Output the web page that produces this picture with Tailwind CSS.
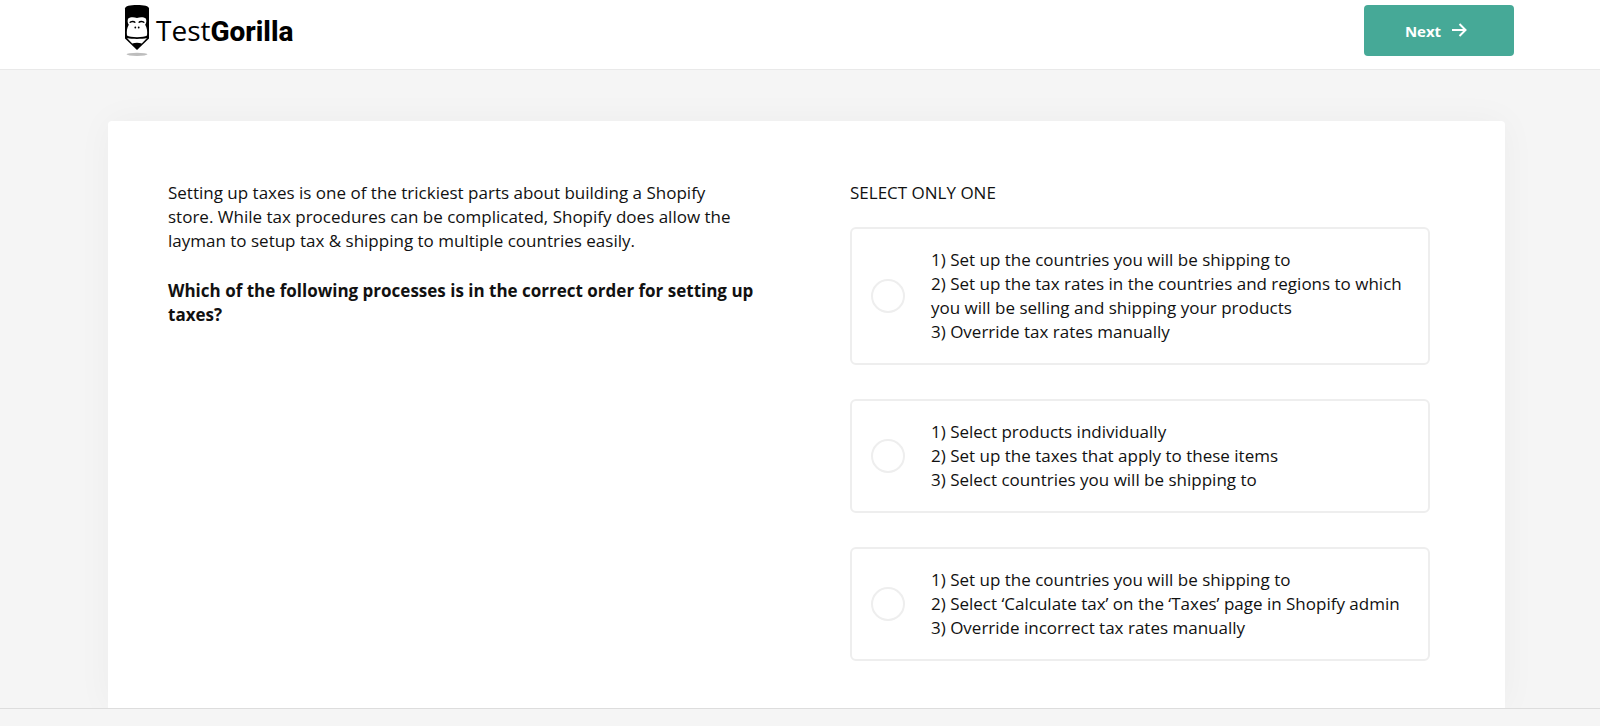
<!DOCTYPE html>
<html lang="en">
<head>
  <meta charset="UTF-8" />
  <meta name="viewport" content="width=device-width, initial-scale=1.0" />
  <title>TestGorilla</title>
  <script src="https://cdn.jsdelivr.net/npm/@tailwindcss/browser@4"></script>
</head>
<body class="flex min-h-screen flex-col bg-[#f5f5f5] font-['Open_Sans',sans-serif] text-[17px] leading-6 text-[#111]">
  <!-- Header -->
  <header class="flex h-[70px] items-start justify-between border-b border-[#e9e9e9] bg-white pt-[5px] pr-[86px] pl-[124px]">
    <a href="#" class="flex items-start gap-[6px] text-black" aria-label="TestGorilla">
      <svg class="h-[52px] w-[26px]" viewBox="0 0 26 52" aria-hidden="true">
        <ellipse cx="13" cy="49.300" rx="10.500" ry="1.600" fill="#bdbdbd" />
        <path d="M1 3.500C1 1 6 0 13 0s12 1 12 3.500V33.500L13 45 1 33.500Z" fill="#000" />
        <!-- Face -->
        <path d="M4.200 13.500c2-1.700 6-1.500 8.800-.6 2.800-.9 6.800-1.100 8.800.6.900 2 .7 4.500-.6 6.300 1.900 3.200 2.300 6.800 1.800 10.700-3 2.300-17 2.300-20 0-.5-3.900-.1-7.500 1.800-10.700-1.300-1.800-1.500-4.300-.6-6.300Z" fill="#fff" />
        <path d="M5.700 17.600c1.200-1.600 4.300-1.600 5.600 0M14.700 17.600c1.300-1.600 4.400-1.600 5.600 0" fill="none" stroke="#000" stroke-width="1.500" />
        <circle cx="11.300" cy="22.500" r=".9" />
        <circle cx="14.700" cy="22.500" r=".9" />
        <!-- Wood -->
        <path d="M3 33c5.500 1.200 14.500 1.200 20 0L17.800 38.600c-3-1.200-6.600-1.200-9.600 0Z" fill="#fff" />
      </svg>
      <span class="flex items-baseline pt-[9px] text-[28px] leading-8">Test<b class="font-['Roboto',sans-serif] font-extrabold">Gorilla</b></span>
    </a>
    <button type="button" class="flex h-[51px] w-[150px] items-center justify-center gap-[10px] rounded bg-[#46a997] pr-[6px] text-[15px] font-bold text-white">
      Next
      <svg class="size-4" viewBox="0 0 16 16" fill="none" stroke="currentColor" stroke-width="2" aria-hidden="true">
        <path d="M1 7h13M8.500 1l6 6-6 6" />
      </svg>
    </button>
  </header>

  <!-- Question -->
  <main class="flex grow flex-col overflow-hidden pt-[51px] pr-[95px] pl-[108px]">
    <div class="grid grow grid-cols-[596fr_580fr] gap-[86px] rounded-t bg-white pt-[60px] pr-[75px] pb-[46px] pl-[60px] shadow-[0_0_36px_rgba(0,0,0,0.04)]">
      <section>
        <p class="mb-[26px]">Setting up taxes is one of the trickiest parts about building a Shopify<br />store. While tax procedures can be complicated, Shopify does allow the<br />layman to setup tax &amp; shipping to multiple countries easily.</p>
        <p class="font-bold">Which of the following processes is in the correct order for setting up taxes?</p>
      </section>

      <fieldset>
        <legend class="mb-[22px]">SELECT ONLY ONE</legend>
        <div class="flex flex-col gap-[34px]">
          <label class="flex items-center gap-[26px] rounded-md border-2 border-[#eee] p-[19px]">
            <input type="radio" name="answer" class="size-[34px] shrink-0 appearance-none rounded-full border-2 border-[#eee] checked:border-[#46a997]" />
            <span>1) Set up the countries you will be shipping to<br />2) Set up the tax rates in the countries and regions to which<br />you will be selling and shipping your products<br />3) Override tax rates manually</span>
          </label>
          <label class="flex items-center gap-[26px] rounded-md border-2 border-[#eee] p-[19px]">
            <input type="radio" name="answer" class="size-[34px] shrink-0 appearance-none rounded-full border-2 border-[#eee] checked:border-[#46a997]" />
            <span>1) Select products individually<br />2) Set up the taxes that apply to these items<br />3) Select countries you will be shipping to</span>
          </label>
          <label class="flex items-center gap-[26px] rounded-md border-2 border-[#eee] p-[19px]">
            <input type="radio" name="answer" class="size-[34px] shrink-0 appearance-none rounded-full border-2 border-[#eee] checked:border-[#46a997]" />
            <span>1) Set up the countries you will be shipping to<br />2) Select ‘Calculate tax’ on the ‘Taxes’ page in Shopify admin<br />3) Override incorrect tax rates manually</span>
          </label>
        </div>
      </fieldset>
    </div>
  </main>

  <footer class="h-[18px] border-t border-[#ddd] bg-[#f5f5f5]"></footer>
</body>
</html>
